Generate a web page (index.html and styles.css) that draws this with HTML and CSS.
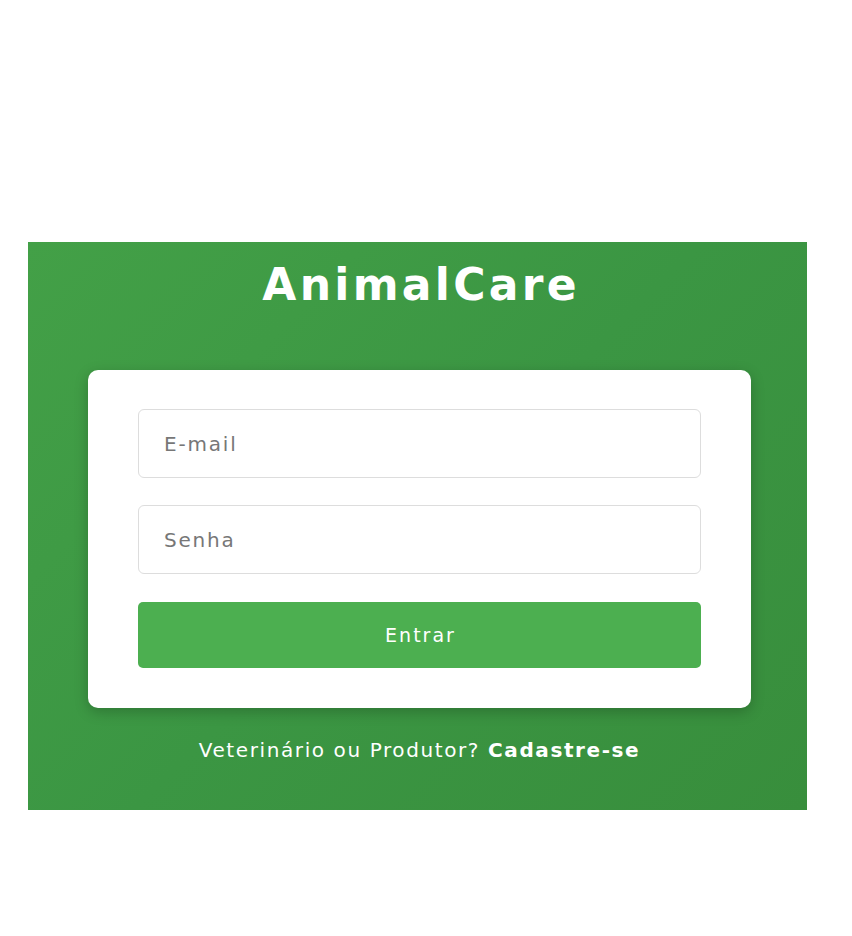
FILE: index.html
```html
<!DOCTYPE html>
<html lang="pt-BR">
<head>
<meta charset="utf-8">
<title>AnimalCare</title>
<link rel="stylesheet" href="styles.css">
</head>
<body>
<main class="panel">
  <h1 class="title">AnimalCare</h1>
  <form class="card">
    <input class="field" type="email" placeholder="E-mail">
    <input class="field" type="password" placeholder="Senha">
    <button class="btn" type="button">Entrar</button>
  </form>
  <p class="footer">Veterinário ou Produtor? <a class="link" href="#">Cadastre-se</a></p>
</main>
</body>
</html>
```
FILE: styles.css
```css
* { box-sizing: border-box; }
html, body { margin: 0; padding: 0; background: #fff; }
body {
  font-family: "DejaVu Sans", "Open Sans", sans-serif;
  padding: 242px 45px 0 28px;
  height: 936px;
}
.panel {
  width: 779px;
  height: 568px;
  background: linear-gradient(135deg, #43a047 0%, #3b9643 50%, #388e3c 100%);
  display: flex;
  flex-direction: column;
  align-items: center;
  padding-top: 13px;
  padding-left: 4px;
}
.title {
  margin: 0;
  color: #fff;
  font-size: 44px;
  font-weight: 700;
  line-height: 60px;
  letter-spacing: 3.3px;
  text-indent: 3.3px;
}
.card {
  margin-top: 55px;
  width: 663px;
  background: #fff;
  border-radius: 10px;
  box-shadow: 0 4px 14px rgba(0,0,0,0.22);
  padding: 39px 50px 40px;
  display: flex;
  flex-direction: column;
  gap: 27px;
}
.field {
  height: 69px;
  border: 1px solid #ddd;
  border-radius: 6px;
  padding: 0 25px;
  font-family: inherit;
  font-size: 20px;
  letter-spacing: 1.8px;
  color: #333;
  outline: none;
}
.field::placeholder { color: #777; }
.btn {
  margin-top: 1px;
  height: 66px;
  border: none;
  border-radius: 5px;
  background: #4caf50;
  color: #fff;
  font-family: inherit;
  font-size: 19px;
  letter-spacing: 2px;
  text-indent: 2px;
}
.footer {
  margin: 28px 0 0;
  color: #fff;
  font-size: 20px;
  line-height: 28px;
  letter-spacing: 1.6px;
}
.link {
  color: #fff;
  font-weight: 700;
  text-decoration: none;
}
```
